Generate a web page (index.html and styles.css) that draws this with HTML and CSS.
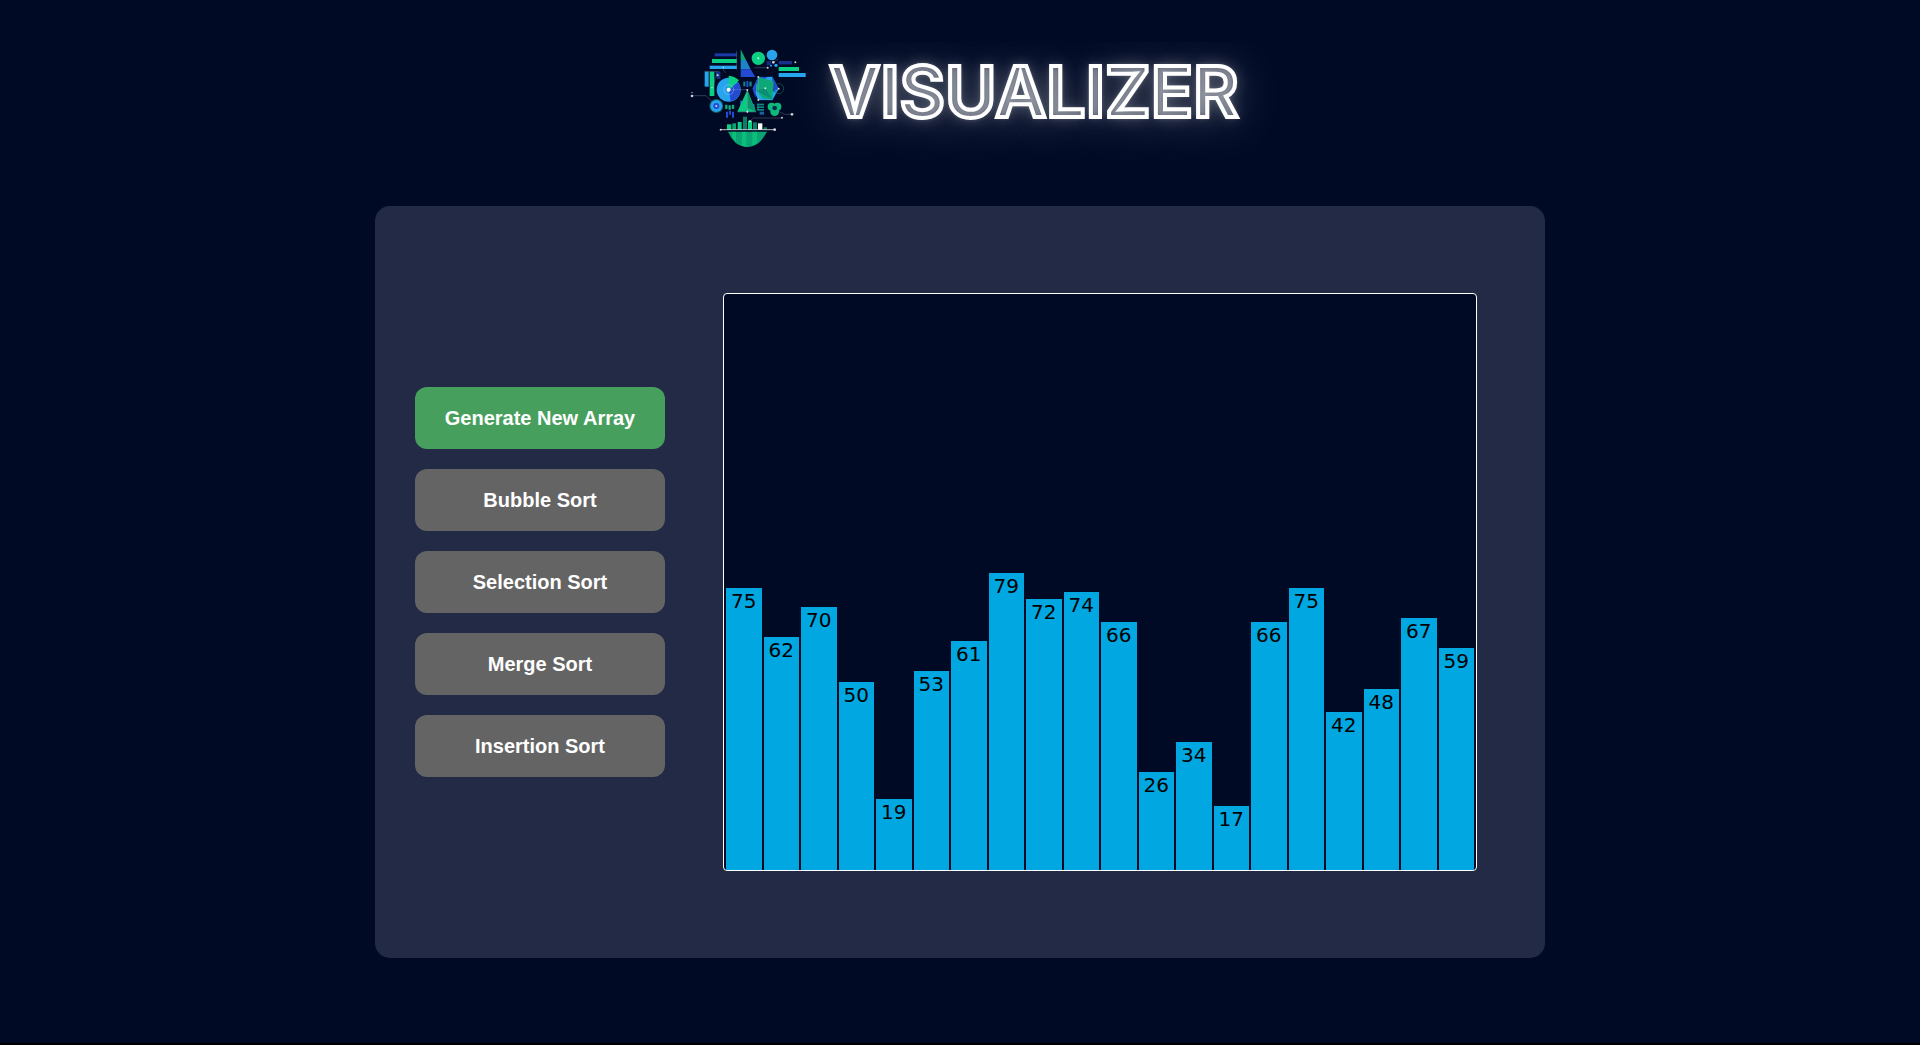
FILE: index.html
```html
<!DOCTYPE html>
<html lang="en">
<head>
<meta charset="utf-8">
<title>Sorting Visualizer</title>
<link rel="stylesheet" href="styles.css">
</head>
<body>
<div class="page">
<header class="brand">
<svg class="brand-mark" viewBox="0 21 420 354" aria-hidden="true">
  <g fill="#234bd2">
    <rect x="101" y="55" width="66" height="9" opacity=".75"/>
    <rect x="293" y="78" width="40" height="10" opacity=".6"/>
    <rect x="257" y="78" width="14" height="13" opacity=".5"/>
    <path d="M103 110h15v22h-10z" opacity=".6"/>
  </g>
  <g fill="#0bcf83">
    <rect x="93" y="72" width="74" height="12"/>
    <rect x="86" y="110" width="14" height="73"/>
    <rect x="293" y="96" width="61" height="12"/>
    <circle cx="232" cy="70" r="20"/>
  </g>
  <g fill="#27a4ee">
    <rect x="86" y="92" width="81" height="10"/>
    <rect x="71" y="110" width="12" height="45"/>
    <rect x="293" y="114" width="81" height="12"/>
    <circle cx="273" cy="60" r="16"/>
    <circle cx="285" cy="91" r="5"/>
    <circle cx="270" cy="92" r="3"/>
  </g>
  <path fill="#0ca66f" d="M179 43l16 32h-16z"/>
  <path fill="#1c83c8" d="M179 75h16l14 28h-30z"/>
  <path fill="#234bd2" d="M179 103h30l14 23h-44z"/>
  <circle cx="143" cy="164" r="36" fill="#27a4ee"/>
  <path fill="#234bd2" d="M143 164l28-23a36 36 0 0 1-22 58z"/>
  <path fill="#0bcf83" d="M143 164v-42q17 1 31 14z"/>
  <circle cx="143" cy="164" r="15" fill="none" stroke="#93caf7" stroke-width="2" opacity=".7"/>
  <circle cx="143" cy="164" r="6" fill="#fff"/>
  <path fill="#27a4ee" d="M232 126l42-1 19 36-19 35-42-1-17-34z"/>
  <path fill="#234bd2" d="M232 126l28 0-34 22-3 40-8-27zM274 125l19 36-22 12z"/>
  <path fill="#0da878" d="M232 126l46 13-4 54-28-2-20-25z"/>
  <path fill="#0b8c76" d="M253 160l21 33-48-26z"/>
  <circle cx="293" cy="161" r="15" fill="none" stroke="#13635f" stroke-width="2"/>
  <path fill="#1c78ce" d="M178 196l18 8-18 26zM202 207h18l2 18-15 5z"/>
  <path fill="#0bc982" d="M199 165l26 65h-56z"/>
  <path fill="#0b976e" d="M199 165l26 65-26-10z"/>
  <g fill="#0b8c83">
    <rect x="187" y="140" width="6" height="14"/>
    <rect x="196" y="138" width="6" height="18" fill="#234bd2"/>
    <rect x="205" y="140" width="7" height="14"/>
    <rect x="229" y="206" width="20" height="5"/>
    <rect x="229" y="214" width="20" height="5"/>
    <rect x="229" y="222" width="20" height="5"/>
    <rect x="236" y="230" width="13" height="9" fill="#17639d"/>
    <rect x="229" y="206" width="4" height="20"/>
  </g>
  <path fill="none" stroke="#0bae7c" stroke-width="7" d="M136 209v13M146 211v13M156 209v13"/>
  <path fill="none" stroke="#234bd2" stroke-width="6" d="M138 230v18M147 227v12M156 230v18"/>
  <circle cx="106" cy="213" r="21" fill="#0d5862"/>
  <circle cx="106" cy="213" r="18" fill="#27a4ee"/>
  <circle cx="106" cy="213" r="9" fill="#234bd2"/>
  <g fill="#0bb97b">
    <circle cx="272" cy="215" r="12"/>
    <circle cx="289" cy="215" r="12"/>
    <circle cx="281" cy="230" r="13"/>
  </g>
  <circle cx="281" cy="219" r="7" fill="#082d4d"/>
  <g fill="#0aa572">
    <rect x="138" y="268" width="13" height="16" fill="#0bcf83"/>
    <rect x="154" y="265" width="11" height="19"/>
    <rect x="170" y="261" width="12" height="23" fill="#0bcf83"/>
    <rect x="186" y="245" width="12" height="39" fill="#0b7f65"/>
    <rect x="201" y="257" width="12" height="27" fill="#0bcf83"/>
    <rect x="216" y="262" width="12" height="22" fill="#0b7f65"/>
    <rect x="231" y="265" width="13" height="19" fill="#fff"/>
    <rect x="248" y="277" width="10" height="7" fill="#0b7f65"/>
    <path d="M141 290h117q-12 22-25 34-34 24-69 0-14-14-23-34z"/>
    <path fill="#0bcf83" opacity=".6" d="M154 290h11v30l-11-12zM183 290h13v46l-13-4zM214 290h14v34l-14 8z"/>
  </g>
  <g fill="none" stroke="#9aa6bd" stroke-width="2" opacity=".7">
    <path d="M118 284h165" stroke="#fff" stroke-width="3"/>
    <path d="M33 182h42l20 20M70 109h45M167 48v56M127 96v10l8 7M220 98h42M277 82l15-10M143 164h56M108 115l-15 45M199 164v70M170 231h56M232 126v68M205 260l12-11h86M287 226l24 12h22" opacity=".65"/>
  </g>
  <g fill="#fff" opacity=".8">
    <circle cx="33" cy="183" r="4"/>
    <circle cx="33" cy="173" r="2"/>
    <circle cx="106" cy="213" r="3"/>
    <circle cx="232" cy="70" r="3"/>
    <circle cx="277" cy="82" r="4"/>
    <circle cx="260" cy="98" r="3"/>
    <circle cx="343" cy="82" r="3"/>
    <circle cx="110" cy="121" r="3"/>
    <circle cx="93" cy="158" r="2"/>
    <circle cx="127" cy="97" r="2"/>
    <circle cx="253" cy="160" r="3"/>
    <circle cx="232" cy="126" r="3"/>
    <circle cx="232" cy="195" r="3"/>
    <circle cx="293" cy="161" r="3"/>
    <circle cx="199" cy="165" r="3"/>
    <circle cx="199" cy="230" r="3"/>
    <circle cx="207" cy="259" r="3"/>
    <circle cx="303" cy="248" r="3"/>
    <circle cx="333" cy="238" r="4"/>
    <circle cx="119" cy="284" r="3"/>
    <circle cx="281" cy="284" r="4"/>
  </g>
</svg>
<h1 class="brand-name">VISUALIZER</h1>
</header>
<main class="panel">
<div class="controls">
<button class="button button-primary" type="button">Generate New Array</button>
<button class="button" type="button">Bubble Sort</button>
<button class="button" type="button">Selection Sort</button>
<button class="button" type="button">Merge Sort</button>
<button class="button" type="button">Insertion Sort</button>
</div>
<div class="chart">
<div class="bar" style="--value:75">75</div>
<div class="bar" style="--value:62">62</div>
<div class="bar" style="--value:70">70</div>
<div class="bar" style="--value:50">50</div>
<div class="bar" style="--value:19">19</div>
<div class="bar" style="--value:53">53</div>
<div class="bar" style="--value:61">61</div>
<div class="bar" style="--value:79">79</div>
<div class="bar" style="--value:72">72</div>
<div class="bar" style="--value:74">74</div>
<div class="bar" style="--value:66">66</div>
<div class="bar" style="--value:26">26</div>
<div class="bar" style="--value:34">34</div>
<div class="bar" style="--value:17">17</div>
<div class="bar" style="--value:66">66</div>
<div class="bar" style="--value:75">75</div>
<div class="bar" style="--value:42">42</div>
<div class="bar" style="--value:48">48</div>
<div class="bar" style="--value:67">67</div>
<div class="bar" style="--value:59">59</div>
</div>
</main>
</div>
</body>
</html>
```
FILE: styles.css
```css
* {
  box-sizing: border-box;
}

html {
  background: #000;
}

body {
  margin: 0;
  font-family: "DejaVu Sans", Verdana, sans-serif;
}

.page {
  min-height: calc(100vh - 2px);
  padding: 42px 20px 40px;
  background: #010a25;
}

.brand {
  display: flex;
  justify-content: center;
  align-items: flex-start;
  gap: 8px;
  margin-bottom: 46px;
}

.brand-mark {
  display: block;
  width: 140px;
  height: 118px;
}

.brand-name {
  margin: 0;
  font: 600 70px/100px Inter, sans-serif;
  color: transparent;
  -webkit-text-stroke: 4px #fff;
  text-shadow: 0 0 5px rgba(255, 255, 255, 0.4), 0 0 16px rgba(255, 255, 255, 0.35), 0 4px 50px rgba(255, 255, 255, 0.35);
  clip-path: inset(0 -60px -60px -60px);
}

.panel {
  display: grid;
  grid-template-columns: 250px minmax(0, 1fr);
  align-items: center;
  gap: 58px;
  max-width: 1170px;
  margin: 0 auto;
  padding: 87px 68px 87px 40px;
  border-radius: 15px;
  background: #222a46;
}

.controls {
  display: grid;
  gap: 20px;
}

.button {
  padding: 20px 0;
  border: 0;
  border-radius: 12px;
  background: #646464;
  color: #fff;
  font: 700 20px/22px "Liberation Sans", Arial, sans-serif;
  cursor: pointer;
}

.button-primary {
  background: #479f5e;
}

.chart {
  display: flex;
  align-items: flex-end;
  height: 578px;
  padding: 0 1px;
  border: 1px solid #fff;
  border-radius: 4px;
  background: #010a25;
}

.bar {
  flex: 1;
  height: calc(var(--value) * 0.653%);
  margin: 0 1px;
  padding-top: 1px;
  background: #00a7e1;
  color: #000;
  font-size: 20px;
  line-height: 24px;
  text-align: center;
}
```
